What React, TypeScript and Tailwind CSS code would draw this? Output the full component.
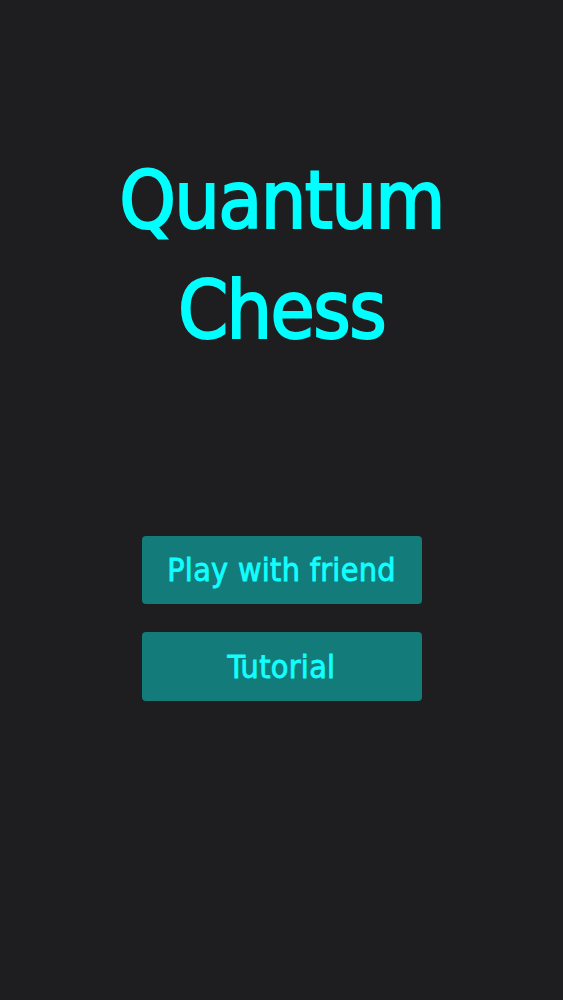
export default function App() {
  return (
    <div
      className="min-h-screen w-full bg-[#1e1d1f] flex flex-col items-center"
      style={{ fontFamily: '"DejaVu Sans Condensed", "DejaVu Sans", sans-serif' }}
    >
      <h1 className="mt-[146px] text-center text-[80px] leading-[110px] font-normal tracking-[-0.02em] text-[#0ff] [-webkit-text-stroke:2px_#00ffff]">
        Quantum
        <br />
        Chess
      </h1>
      <div className="mt-[170px] flex flex-col gap-[28px]">
        <button
          type="button"
          className="w-[280px] h-[68px] rounded-[4px] bg-[#137b7a] text-[#1ff] text-[32px] tracking-[0.01em] [-webkit-text-stroke:0.8px_#11ffff]"
        >
          Play with friend
        </button>
        <button
          type="button"
          className="w-[280px] h-[69px] rounded-[4px] bg-[#137b7a] text-[#1ff] text-[32px] tracking-[0.01em] [-webkit-text-stroke:0.8px_#11ffff]"
        >
          Tutorial
        </button>
      </div>
    </div>
  );
}
